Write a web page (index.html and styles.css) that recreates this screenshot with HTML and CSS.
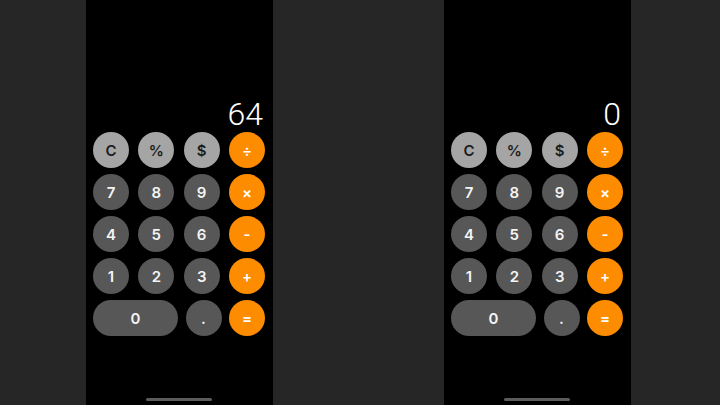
FILE: index.html
```html
<!DOCTYPE html>
<html>
<head>
<meta charset="utf-8">
<link rel="stylesheet" href="styles.css">
</head>
<body>
<div class="stage">
  <div class="phone">
    <div class="display">64</div>
    <div class="keypad">
      <div class="key light">C</div>
      <div class="key light">%</div>
      <div class="key light">$</div>
      <div class="key op">÷</div>
      <div class="key dark">7</div>
      <div class="key dark">8</div>
      <div class="key dark">9</div>
      <div class="key op">×</div>
      <div class="key dark">4</div>
      <div class="key dark">5</div>
      <div class="key dark">6</div>
      <div class="key op">-</div>
      <div class="key dark">1</div>
      <div class="key dark">2</div>
      <div class="key dark">3</div>
      <div class="key op">+</div>
    </div>
    <div class="lastrow">
      <div class="key dark zero">0</div>
      <div class="key dark">.</div>
      <div class="key op">=</div>
    </div>
    <div class="homebar"></div>
  </div>
  <div class="phone">
    <div class="display">0</div>
    <div class="keypad">
      <div class="key light">C</div>
      <div class="key light">%</div>
      <div class="key light">$</div>
      <div class="key op">÷</div>
      <div class="key dark">7</div>
      <div class="key dark">8</div>
      <div class="key dark">9</div>
      <div class="key op">×</div>
      <div class="key dark">4</div>
      <div class="key dark">5</div>
      <div class="key dark">6</div>
      <div class="key op">-</div>
      <div class="key dark">1</div>
      <div class="key dark">2</div>
      <div class="key dark">3</div>
      <div class="key op">+</div>
    </div>
    <div class="lastrow">
      <div class="key dark zero">0</div>
      <div class="key dark">.</div>
      <div class="key op">=</div>
    </div>
    <div class="homebar"></div>
  </div>
</div>
</body>
</html>
```

FILE: styles.css
```css
html, body {
  margin: 0;
  padding: 0;
  background: #262626;
  width: 720px;
  height: 405px;
  overflow: hidden;
}

.stage {
  display: flex;
  gap: 171px;
  padding-left: 86px;
  height: 405px;
}

.phone {
  width: 187px;
  height: 405px;
  background: #000;
  box-sizing: border-box;
  padding: 0 8px 0 7px;
  display: flex;
  flex-direction: column;
}

.display {
  margin-top: 98px;
  height: 32px;
  line-height: 32px;
  font-family: Roboto, "Liberation Sans", sans-serif;
  font-weight: 300;
  font-size: 32px;
  color: #fff;
  text-align: right;
  padding-right: 2px;
}

.keypad {
  margin-top: 2px;
  display: grid;
  grid-template-columns: repeat(4, 36px);
  grid-auto-rows: 36px;
  justify-content: space-between;
  row-gap: 6px;
}

.lastrow {
  margin-top: 6px;
  display: flex;
  justify-content: space-between;
}

.key {
  width: 36px;
  height: 36px;
  border-radius: 18px;
  display: flex;
  align-items: center;
  justify-content: center;
  font-family: Inter, "Liberation Sans", sans-serif;
  font-weight: 600;
  font-size: 15px;
  color: #f4f4f4;
}

.key.zero {
  width: 85px;
}

.light {
  background: #a5a5a5;
  color: #1c1c1c;
}

.dark {
  background: #575757;
}

.op {
  background: #fe8c00;
  color: #fff;
}

.homebar {
  margin-top: auto;
  margin-bottom: 4px;
  align-self: center;
  width: 66px;
  height: 3px;
  border-radius: 2px;
  background: #5c5c5c;
}
```
